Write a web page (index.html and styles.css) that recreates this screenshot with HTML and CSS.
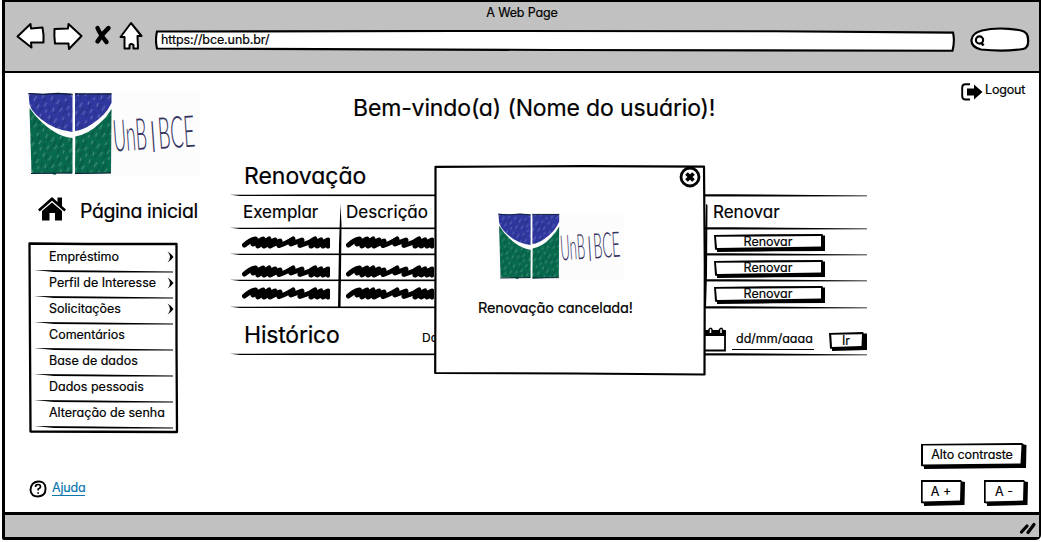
FILE: index.html
```html
<!DOCTYPE html>
<html lang="pt-BR">
<head>
<meta charset="utf-8">
<title>A Web Page</title>
<link rel="stylesheet" href="styles.css">
</head>
<body>
<svg class="defs" width="0" height="0">
  <defs>
    <pattern id="ink" width="23" height="19" patternUnits="userSpaceOnUse" patternTransform="rotate(8)">
      <path d="M2 1l-1 4M9 3l-2 5M16 1l-1 3M20 8l-2 4M5 12l-1 4M13 11l-2 4M21 15l-1 3" stroke="#fff" stroke-opacity=".5" stroke-width=".6" fill="none"/>
      <path d="M5 2l-2 6M12 6l-3 7M18 3l-3 8M8 14l-2 4M17 13l-3 5M1 10l-1 6" stroke="#06233f" stroke-opacity=".35" stroke-width="1.1" fill="none"/>
    </pattern>
    <symbol id="logo" viewBox="0 0 172 84" preserveAspectRatio="none">
      <path d="M0 0H172V84H0Z" fill="#fdfcfd"/>
      <path d="M.5 1L15 2L30 1L44.500 2V40Q26 38 13 27Q3 19 1.500 12Z" fill="#3038a0"/>
      <path d="M47 1.500L60 2L83.500 1.500V11Q78 23 64 32Q55 38 47 39Z" fill="#3038a0"/>
      <path d="M1.500 16Q12 31 25 39Q34 45 44.500 46V81.500L29 81L27 83L23 81.500L3.500 81Z" fill="#086a4c"/>
      <path d="M47.300 44.500Q61 42 72 31Q79 25 83.500 17L83 81L47 82Z" fill="#086a4c"/>
      <path d="M.5 1H44.500V40Q26 38 13 27Q3 19 1.500 12ZM47 1H83.500V11Q78 23 64 32Q55 38 47 39ZM1.500 16Q12 31 25 39Q34 45 44.500 46V81.500H3.500ZM47.300 44.500Q61 42 72 31Q79 25 83.500 17L83 81L47 82Z" fill="url(#ink)"/>
      <path d="M.5 1.500L15 2.300L30 1.300L44.500 2.300M47 1.800L83.500 1.800M3 81.500L44 81M47 81.500L83 81" stroke="#0b1c33" stroke-width="1.200" fill="none"/>
      <g class="logo-text" transform="rotate(-4 87 60)">
        <text x="86" y="59.500" textLength="34" lengthAdjust="spacingAndGlyphs">UnB</text>
        <text x="122" y="57" class="logo-bar">|</text>
        <text x="131" y="60" textLength="37" lengthAdjust="spacingAndGlyphs">BCE</text>
      </g>
    </symbol>
    <symbol id="scribble" viewBox="0 0 88 13">
      <path d="M2.500 9Q8 4 13.500 3L11 8L21 3L16 10L27 3L22 10L33 4L28 10L38 5L37 9.500Q43 8 51 3L49 8L60 4L58 9.500L68 6L73 3L69 10L79 4L75 10L86 4L81 10L89 6L86 10" fill="none" stroke="#000" stroke-width="5" stroke-linecap="round" stroke-linejoin="round"/>
    </symbol>
    <symbol id="chevron" viewBox="0 0 7 12"><path d="M.5 .5Q4.500 3 6.500 6Q4.500 9 .5 11.500Q3 8.500 3 6Q3 3.500 .5 .5Z"/></symbol>
  </defs>
</svg>

<div class="browser">
  <header class="chrome">
    <div class="window-title"><span>A Web Page</span></div>
    <div class="toolbar">
      <svg class="nav-icons" width="130" height="30" viewBox="0 0 130 30">
        <g fill="#fff" stroke="#000" stroke-width="2" stroke-linejoin="round">
          <path d="M1.500 15.500L14.500 3L15 7.500L26.500 6.500Q28 14 27.500 21.500L15 21.500L15.500 26.500Z"/>
          <path d="M38.500 8L52 7.500L52.500 3L65.500 15L53 28L52.500 22.500L39 22.500Q38 15 38.500 8Z"/>
          <path d="M115 2L125.500 15H121.500L122 27.500H117.500V24Q115 22 113.500 24V27.500H108.500V16H104.500Z"/>
        </g>
        <path d="M81.500 7Q84 13 90.500 21M92.500 7Q87 12 81.500 20.500" stroke="#000" stroke-width="4.400" stroke-linecap="round" fill="none"/>
      </svg>
      <div class="address"><span>https://bce.unb.br/</span></div>
      <svg class="search" width="60" height="26" viewBox="0 0 60 26">
        <path d="M12 3.500Q29 -.500 51 3.500Q58 5 58 12Q59 21 53 22Q34 25 11 22.500Q1 20 1.500 13Q2 6 12 3.500Z" fill="#fff" stroke="#000" stroke-width="2.200"/>
        <circle cx="9.500" cy="13" r="3.600" fill="none" stroke="#000" stroke-width="2.200"/>
        <path d="M11.500 16L13.500 18.500" stroke="#000" stroke-width="2.600"/>
      </svg>
    </div>
  </header>

  <main class="page">
    <aside class="sidebar">
      <svg class="brand" width="172" height="84"><use href="#logo"/></svg>
      <div class="home">
        <svg width="28" height="24" viewBox="0 0 28 24">
          <path d="M14 0L19.500 5V.500H24V9L28 12.500L26.300 14.500L14 3.800L1.700 14.500L0 12.500Z"/>
          <path d="M4 14L14 5.500L24 14V23.500H17V16H11.500V23.500H4Z"/>
        </svg>
        <span>Página inicial</span>
      </div>
      <nav class="menu">
        <a class="item"><span>Empréstimo</span><svg width="7" height="12"><use href="#chevron"/></svg></a>
        <a class="item"><span>Perfil de Interesse</span><svg width="7" height="12"><use href="#chevron"/></svg></a>
        <a class="item"><span>Solicitações</span><svg width="7" height="12"><use href="#chevron"/></svg></a>
        <a class="item"><span>Comentários</span></a>
        <a class="item"><span>Base de dados</span></a>
        <a class="item"><span>Dados pessoais</span></a>
        <a class="item"><span>Alteração de senha</span></a>
      </nav>
      <div class="help">
        <svg width="18" height="18" viewBox="0 0 18 18">
          <path d="M9 1.500Q16 1 16.500 8Q17 16 9 16.500Q2 16.500 1.500 10Q2 2 9 1.500Z" fill="none" stroke="#000" stroke-width="1.900"/>
          <path d="M6.500 7Q6.500 4.500 9 4.500Q11.500 4.500 11.500 6.700Q11.500 8 9.200 9V10.600M9.100 12.200V13.800" fill="none" stroke="#000" stroke-width="1.700"/>
        </svg>
        <a>Ajuda</a>
      </div>
    </aside>

    <section class="content">
      <h1><span>Bem-vindo(a) (Nome do usuário)!</span></h1>
      <h2 class="ruled"><span>Renovação</span></h2>
      <div class="table">
        <div class="row head ruled"><span class="c1">Exemplar</span><span class="c2">Descrição</span><span class="c3">Renovar</span></div>
        <div class="row ruled">
          <svg class="mark" width="88" height="13"><use href="#scribble"/></svg><svg class="mark" width="88" height="13"><use href="#scribble"/></svg><button class="btn renew">Renovar</button>
        </div>
        <div class="row ruled low">
          <svg class="mark" width="88" height="13"><use href="#scribble"/></svg><svg class="mark" width="88" height="13"><use href="#scribble"/></svg><button class="btn renew">Renovar</button>
        </div>
        <div class="row ruled">
          <svg class="mark" width="88" height="13"><use href="#scribble"/></svg><svg class="mark" width="88" height="13"><use href="#scribble"/></svg><button class="btn renew">Renovar</button>
        </div>
      </div>
      <div class="history ruled">
        <h2><span>Histórico</span></h2>
        <span class="date-label">Data</span>
        <svg class="calendar" width="26" height="25" viewBox="0 0 26 25">
          <path d="M2 4H24V23.500H2Z" fill="#fff" stroke="#000" stroke-width="1.800"/>
          <path d="M1 4H25V9H1Z"/>
          <path d="M8 6V2.500Q10 0 11 2.500V6M18.500 6V2.500Q20.500 0 21.500 2.500V6" fill="#fff" stroke="#000" stroke-width="1.500"/>
        </svg>
        <span class="date"><span>dd/mm/aaaa</span></span>
        <button class="btn go">Ir</button>
      </div>
    </section>

    <aside class="actions">
      <div class="logout">
        <svg width="22" height="18" viewBox="0 0 22 18">
          <path d="M9 1.200H4.500Q1.200 1.200 1.200 4.500V13Q1.200 16.500 4.500 16.500H9" fill="none" stroke="#000" stroke-width="1.900"/>
          <path d="M6 5.500H13V1.500L21.500 9L13 16.500V12.500H6Z"/>
        </svg>
        <span>Logout</span>
      </div>
      <div class="access">
        <button class="btn contrast"><span>Alto contraste</span></button>
        <div class="sizes"><button class="btn size">A +</button><button class="btn size">A -</button></div>
      </div>
    </aside>
  </main>

  <footer class="status">
    <svg width="18" height="16" viewBox="0 0 18 16"><path d="M2.500 12L8 6M9 12.500L15 4.500" stroke="#000" stroke-width="3.200" stroke-linecap="round"/></svg>
  </footer>

  <div class="modal">
    <svg class="close" width="22" height="22" viewBox="0 0 22 22">
      <circle cx="11" cy="11" r="9" fill="#fff" stroke="#000" stroke-width="2.800"/>
      <path d="M7.500 7.500L14.500 14.500M14.500 7.500L7.500 14.500" stroke="#000" stroke-width="3.800"/>
    </svg>
    <svg class="modal-logo" width="126" height="67" viewBox="0 0 126 67"><use href="#logo" width="126" height="67"/></svg>
    <p><span>Renovação cancelada!</span></p>
  </div>
</div>
</body>
</html>
```

FILE: styles.css
```css
* { box-sizing: border-box; }
body {
  margin: 0;
  overflow: hidden;
  background: #fff;
  color: #000;
  font-family: Inter, "Open Sans", sans-serif;
  font-feature-settings: "cv11";
  font-size: 12.500px;
  -webkit-text-stroke: .2px;
}
h1, h2, p { margin: 0; font-weight: 400; white-space: nowrap; }
span, a { white-space: nowrap; }
.defs { position: absolute; }
.logo-text {
  font-family: Lato, sans-serif;
  font-weight: 300;
  font-size: 44px;
  fill: #33335f;
}
.logo-bar { font-size: 33px; }

.browser {
  position: relative;
  display: flex;
  flex-direction: column;
  width: 1039px;
  height: 540px;
  margin-left: 2px;
  border: solid #000;
  border-width: 2px 2px 3px 3px;
  border-radius: 0 0 5px 2px;
}

.chrome { height: 71px; background: #c1c1c1; border-bottom: 2px solid #000; }
.window-title { height: 22px; line-height: 22px; text-align: center; letter-spacing: -.150px; }
.toolbar { display: flex; height: 30px; padding-left: 11px; }
.nav-icons { flex: none; margin-top: -3px; }
.address {
  width: 800px;
  height: 22px;
  margin: 6px 0 0 9px;
  padding-left: 6px;
  line-height: 20px;
  letter-spacing: -.100px;
  background: url("data:image/svg+xml,%3Csvg xmlns='http://www.w3.org/2000/svg' width='800' height='22'%3E%3Cpath d='M2 1.500L300 1L620 1.300L798 2.600Q800 11 797.500 20.800L400 20L2 18.500Q0 10 2 1.500Z' fill='%23fff' stroke='%23000' stroke-width='2.100'/%3E%3C/svg%3E") no-repeat;
}
.search { margin: 3px 0 0 15px; }

.page { display: grid; grid-template-columns: 225px 637px 172px; height: 439px; }

.sidebar { padding: 19px 0 0 23px; }
.brand { display: block; }
.home { display: flex; height: 24px; margin-top: 21px; padding-left: 10px; font-size: 19.500px; line-height: 29px; }
.home span { margin-left: 14px; letter-spacing: -.400px; }
.menu {
  width: 151px;
  height: 192px;
  margin-top: 21px;
  padding: 6px 6px 0;
  background: url("data:image/svg+xml,%3Csvg xmlns='http://www.w3.org/2000/svg' width='151' height='192'%3E%3Cpath d='M1.500 1.500L60 2L148.500 2L148.500 100L149 190L2.500 189.500L2 100Z' fill='none' stroke='%23000' stroke-width='2.300' stroke-linejoin='round'/%3E%3C/svg%3E") no-repeat;
}
.item {
  display: flex;
  justify-content: space-between;
  height: 26px;
  padding: 0 0 0 15px;
  line-height: 17px;
  background: url("data:image/svg+xml,%3Csvg xmlns='http://www.w3.org/2000/svg' width='140' height='4'%3E%3Cpath d='M0 0L60 .6L100 .9L139 1.600V2.600L80 2.600L20 1.900Z'/%3E%3C/svg%3E") 0 100% no-repeat;
}
.item svg { margin: 3px -1px 0 0; }
.help { display: flex; margin-top: 46px; padding-left: 1px; }
.help a { height: 16px; margin-left: 5px; line-height: 16px; letter-spacing: -.200px; color: #0b76ad; border-bottom: 1px solid #0b76ad; }

.content { padding-top: 13px; }
h1 { height: 44px; padding-left: 123px; font-size: 23px; line-height: 44px; letter-spacing: -.140px; }
h2 { font-size: 23px; }
.ruled {
  background: url("data:image/svg+xml,%3Csvg xmlns='http://www.w3.org/2000/svg' width='637' height='3'%3E%3Cpath d='M0 .8L70 .5L500 .3L637 1.500V2.200L560 2.400L10 2Z'/%3E%3C/svg%3E") 0 100% no-repeat;
}
h2.ruled { height: 67px; padding: 32px 0 0 14px; line-height: 28px; }
.table {
  background: url("data:image/svg+xml,%3Csvg xmlns='http://www.w3.org/2000/svg' width='4' height='106'%3E%3Cpath d='M2.500 0L3.500 20L3 70L2.500 104L0 104L1 40Z'/%3E%3C/svg%3E") 108px 7px no-repeat,
              url("data:image/svg+xml,%3Csvg xmlns='http://www.w3.org/2000/svg' width='4' height='106'%3E%3Cpath d='M2 0L3.500 1L3 70L2 104L0 104L1 40Z'/%3E%3C/svg%3E") 474px 7px no-repeat;
}
.row { display: grid; grid-template-columns: 104px 368px 1fr; height: 26px; padding-left: 12px; }
.row.head { height: 33px; font-size: 17px; line-height: 31px; }
.head .c1 { padding-left: 1px; }
.table .row:last-child { height: 27px; }
.head .c3 { margin-left: -1px; }
.mark { margin: 6px 0 0; }
.low .mark { margin-top: 9px; }
.row:last-child .mark { margin-top: 5px; }
.btn {
  display: block;
  padding: 0 4px 2px 0;
  border: 0;
  font: inherit;
  white-space: nowrap;
  background: url("data:image/svg+xml,%3Csvg xmlns='http://www.w3.org/2000/svg' width='112' height='18'%3E%3Cpath d='M0 1L50 .3L108.500 0L109 1.500H111V17L60 17.300L3 18V16L1 15.500Z'/%3E%3Cpath d='M2 2.700L107 2V12.400L60 13.200L3 14Z' fill='%23fff'/%3E%3C/svg%3E") no-repeat;
}
.renew { width: 112px; height: 18px; margin-top: 4px; line-height: 16px; }

.history { display: flex; height: 47px; padding-left: 14px; }
.history h2 { width: 178px; padding-top: 12px; line-height: 28px; letter-spacing: -.200px; }
.date-label { width: 281px; padding-top: 19px; font-size: 12px; line-height: 20px; }
.calendar { margin: 18px 0 0 -2px; }
.date { width: 82px; height: 21px; margin: 20px 0 0 5px; padding-left: 4px; border-bottom: 1.500px solid #000; line-height: 20px; }
.go {
  width: 38px;
  height: 19px;
  margin: 23px 0 0 15px;
  line-height: 18px;
  background-image: url("data:image/svg+xml,%3Csvg xmlns='http://www.w3.org/2000/svg' width='38' height='19'%3E%3Cpath d='M0 1L34 0L35 1.500H38V18L3 19V17L1 16.500Z'/%3E%3Cpath d='M2.200 2.700L33 2.200L32.500 14L3 15Z' fill='%23fff'/%3E%3C/svg%3E");
}

.actions { display: flex; flex-direction: column; justify-content: space-between; padding: 10px 9px 6px 54px; }
.logout { display: flex; height: 18px; padding-left: 40px; line-height: 14px; letter-spacing: -.150px; }
.logout span { margin-left: 2px; }
.contrast {
  width: 106px;
  height: 26px;
  line-height: 24px;
  letter-spacing: -.100px;
  background-image: url("data:image/svg+xml,%3Csvg xmlns='http://www.w3.org/2000/svg' width='106' height='26'%3E%3Cpath d='M0 1L101 0L103 1.500L105.500 2L105 25L3 26V23.500L0 23Z'/%3E%3Cpath d='M2 2.500L100.500 2L99.500 20.500L2 21.500Z' fill='%23fff'/%3E%3C/svg%3E");
}
.sizes { display: flex; gap: 19px; margin-top: 11px; }
.size {
  width: 44px;
  height: 26px;
  line-height: 24px;
  background-image: url("data:image/svg+xml,%3Csvg xmlns='http://www.w3.org/2000/svg' width='44' height='26'%3E%3Cpath d='M0 0L40 0L41 1.500L44 2L43.500 25L3 26V23.500L0 23Z'/%3E%3Cpath d='M1.700 2L39.500 2L39 20.500L1.700 21.500Z' fill='%23fff'/%3E%3C/svg%3E");
}

.status { display: flex; justify-content: flex-end; height: 25px; padding: 5px 2px 0 0; background: #c1c1c1; border-top: 3px solid #000; }

.modal {
  position: absolute;
  left: 429px;
  top: 163px;
  width: 272px;
  height: 211px;
  background: url("data:image/svg+xml,%3Csvg xmlns='http://www.w3.org/2000/svg' width='272' height='211'%3E%3Cpath d='M1.500 1.800L150 1.200L270 1.700L270.800 100L270.500 209.500L140 208.500L1.200 208L1.500 100Z' fill='%23fff' stroke='%23000' stroke-width='2.200' stroke-linejoin='round'/%3E%3C/svg%3E") no-repeat;
}
.close { display: block; margin: 1px 0 0 245px; }
.modal-logo { display: block; margin: 25px 0 0 64px; }
.modal p { margin: 16px 0 0 44px; font-size: 14.500px; line-height: 24px; letter-spacing: -.160px; }
```
